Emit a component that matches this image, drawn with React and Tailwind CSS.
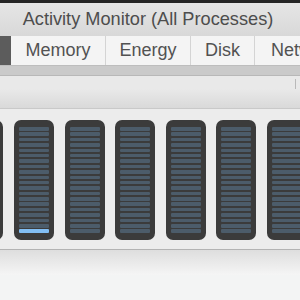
const meters = [0, 1, 2, 3, 4, 5, 6];
const bars = Array.from({ length: 20 }, (_, i) => i);

const Meter = ({ active }) => (
  <div className="w-[40px] h-[120px] shrink-0 rounded-[7px] bg-[#3b3b3b] px-[5px] pt-[7px] pb-[7px] flex flex-col justify-between">
    {bars.map((b) => (
      <div
        key={b}
        className={`h-[3.5px] rounded-[1px] ${
          active && b === 19 ? "bg-[#82bef3]" : "bg-[#4c5c6a]"
        }`}
      />
    ))}
  </div>
);

export default function App() {
  return (
    <div className="w-[300px] h-[300px] overflow-hidden bg-[#f3f4f4] flex flex-col" style={{ fontFamily: '"Liberation Sans", Arial, sans-serif' }}>
      {/* window top edge */}
      <div className="h-[3px] bg-[#262626] shrink-0" />

      {/* title bar */}
      <div className="h-[33px] shrink-0 bg-gradient-to-b from-[#e6e6e6] to-[#d8d8d8] flex items-center justify-center">
        <span className="text-[18.2px] text-[#4d4d4d] ml-[-4px] whitespace-nowrap">Activity Monitor (All Processes)</span>
      </div>

      {/* tabs */}
      <div className="h-[30px] shrink-0 flex bg-[#f4f4f4] border-b border-[#bdbdbd] text-[18px] text-[#525252] overflow-hidden">
        <div className="w-[11px] shrink-0 bg-[#5c5c5c]" />
        <div className="w-[95px] shrink-0 flex items-center justify-center border-r border-[#d4d4d4]">Memory</div>
        <div className="w-[85px] shrink-0 flex items-center justify-center border-r border-[#d4d4d4]">Energy</div>
        <div className="w-[64px] shrink-0 flex items-center justify-center border-r border-[#d4d4d4]">Disk</div>
        <div className="w-[100px] shrink-0 flex items-center pl-[16px] whitespace-nowrap">Network</div>
      </div>

      {/* toolbar band */}
      <div className="h-[10px] shrink-0 bg-[#cacaca] border-b border-[#b8b8b8]" />
      <div className="h-[13px] shrink-0 bg-[#e9e9e9] flex items-end justify-end pr-[4px]">
        <div className="w-px h-[10px] bg-[#b9b9b9]" />
      </div>
      <div className="h-[20px] shrink-0 bg-gradient-to-b from-[#e9e9e9] to-[#d9d9d9] border-b border-[#c9c9c9]" />

      {/* meters */}
      <div className="h-[141px] shrink-0 bg-[#ececec] pt-[11px] border-b border-[#b3b3b3]">
        <div className="flex gap-[10.6px] ml-[-36.6px]">
          {meters.map((m) => (
            <Meter key={m} active={m === 1} />
          ))}
        </div>
      </div>

      {/* bottom pane */}
      <div className="h-[25px] shrink-0 bg-gradient-to-b from-[#dedede] to-[#f5f5f5]" />
      <div className="flex-1 bg-[#f3f4f4]" />
    </div>
  );
}
